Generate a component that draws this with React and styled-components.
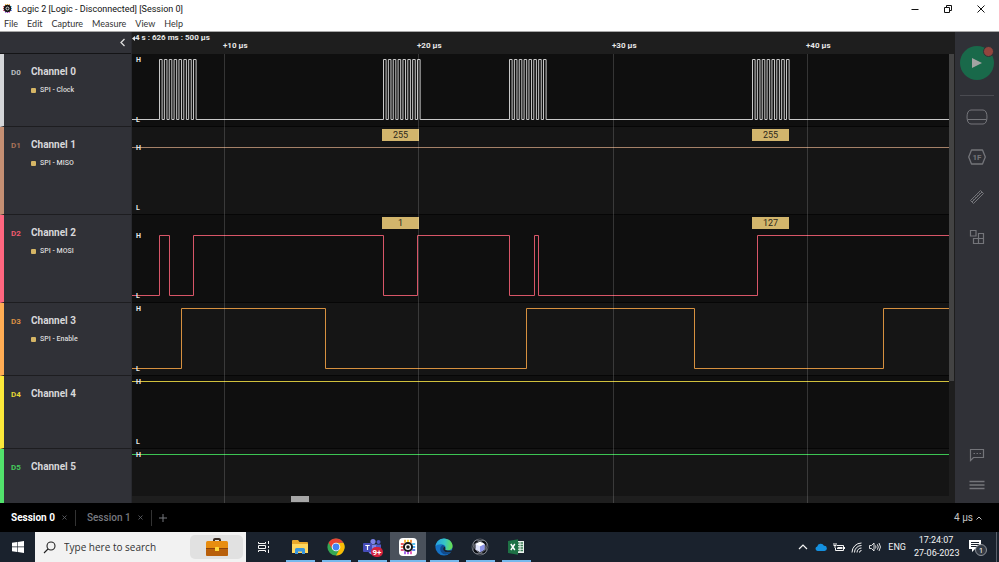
import React from "react";
import styled, { createGlobalStyle, css } from "styled-components";

const UI = `"Open Sans", "Noto Sans", sans-serif`;
const APP = `Roboto, "Liberation Sans", sans-serif`;

const SPAN = 817;
const pct = (x) => (x / SPAN) * 100;

const GlobalStyle = createGlobalStyle`
  * { box-sizing: border-box; }
  body { margin: 0; background: #000; }
  button, input { font: inherit; color: inherit; border: 0; padding: 0; margin: 0; background: none; }
  button { cursor: pointer; }
  svg { display: block; }
`;

const Page = styled.div`
  height: 100vh;
  display: flex;
  flex-direction: column;
  overflow: hidden;
  font-family: ${APP};
`;

/* Window chrome */
const TitleBar = styled.header`
  display: flex;
  align-items: center;
  height: 17px;
  flex: none;
  padding: 0 2px;
  background: #fff;
  color: #111;
  font: 9px/16px ${APP};
`;
const Title = styled.h1`
  flex: 1;
  margin: 0 0 0 4px;
  font: inherit;
  white-space: nowrap;
`;
const WindowButton = styled.button`
  width: 33px;
  height: 16px;
  display: grid;
  place-items: center;
`;
const MenuBar = styled.nav`
  display: flex;
  gap: 9px;
  height: 15px;
  flex: none;
  padding-left: 4px;
  background: #fff;
  border-bottom: 1px solid #a8a8a8;
  color: #333;
  font: 9px/14px Lato, ${UI};
`;
const MenuItem = styled.button`
  height: 14px;
  line-height: 14px;
`;

/* Workspace */
const Workspace = styled.main`
  flex: 1;
  min-height: 0;
  display: grid;
  grid-template-columns: 132px minmax(0, 1fr) 44px;
`;
const Sidebar = styled.section`
  display: flex;
  flex-direction: column;
  min-height: 0;
  overflow: hidden;
  background: #303137;
  border-right: 1px solid #28292e;
`;
const SidebarHead = styled.div`
  height: 22px;
  flex: none;
  display: flex;
  align-items: center;
  justify-content: flex-end;
  padding-right: 5px;
  border-bottom: 1px solid #141416;
  color: #ddd;
`;
const Channel = styled.article`
  flex: none;
  display: grid;
  grid-template-columns: 20px 1fr;
  align-content: start;
  height: ${(p) => p.$height}px;
  padding: 10px 0 0 7px;
  border-left: 4px solid ${(p) => p.$color};
  border-bottom: 1px solid #1d1d20;
`;
const ChannelTag = styled.span`
  font: 700 8px/18px ${APP};
  color: ${(p) => p.$color};
`;
const ChannelName = styled.h2`
  margin: 0;
  font: 700 10px/16px ${APP};
  color: #d8d8da;
`;
const Analyzer = styled.p`
  grid-column: 2;
  display: flex;
  align-items: center;
  gap: 4px;
  margin: 2px 0 0;
  font: 500 7px/12px ${APP};
  color: #dcdcdc;

  &::before {
    content: "";
    width: 5px;
    height: 5px;
    border-radius: 1px;
    background: #d5b565;
  }
`;

const Plot = styled.section`
  display: grid;
  grid-template: 22px minmax(0, 1fr) 7px / minmax(0, 1fr) 6px;
  min-height: 0;
  background: #1e1e1e;
`;
const Ruler = styled.div`
  grid-area: 1 / 1;
  position: relative;
  color: #e8e8e8;
  font: 700 8px/12px ${APP};
  white-space: nowrap;
`;
const RulerStart = styled.span`
  display: flex;
  align-items: center;
`;
const RulerTick = styled.span`
  position: absolute;
  top: 8px;
  left: ${(p) => pct(p.$at)}%;
  margin-left: -1px;
`;
const Traces = styled.div`
  grid-area: 2 / 1;
  min-height: 0;
  overflow: hidden;
`;
const Grid = styled.div`
  grid-area: 2 / 1 / 4 / 2;
  position: relative;
  pointer-events: none;
`;
const GridLine = styled.i`
  position: absolute;
  top: 0;
  bottom: 0;
  left: ${(p) => pct(p.$at)}%;
  width: 1px;
  background: rgba(255, 255, 255, 0.16);
`;
const Lane = styled.div`
  position: relative;
  height: ${(p) => p.$height}px;
  background: ${(p) => (p.$alt ? "#151515" : "#0f0f0f")};
  border-bottom: 1px solid #060606;

  svg { width: 100%; height: 100%; }
`;
const Level = styled.span`
  position: absolute;
  left: 4px;
  top: ${(p) => p.$top}px;
  font: 700 7px/8px ${APP};
  color: #e8e8e8;
`;
const Bubble = styled.span`
  position: absolute;
  top: 2px;
  left: ${(p) => pct(p.$at)}%;
  width: ${pct(37)}%;
  background: #d2b56c;
  color: #2b2719;
  font: 9px/12px ${APP};
  text-align: center;
`;
const VerticalThumb = styled.div`
  grid-area: 2 / 2;
  height: 327px;
  margin-right: 1px;
  background: #434343;
`;
const HorizontalTrack = styled.div`
  grid-area: 3 / 1;
  padding-left: 19%;
`;
const HorizontalThumb = styled.div`
  width: 18px;
  height: 6px;
  margin-left: 4px;
  background: #a6a6a6;
`;

const Rail = styled.aside`
  display: flex;
  flex-direction: column;
  align-items: center;
  padding: 14px 0 7px;
  background: #303137;
  color: #74757a;
`;
const PlayButton = styled.button`
  position: relative;
  width: 34px;
  height: 34px;
  border-radius: 50%;
  background: #19694a;
  display: grid;
  place-items: center;
`;
const RecordDot = styled.i`
  position: absolute;
  top: 0;
  right: 0;
  width: 11px;
  height: 11px;
  border-radius: 50%;
  background: #92453e;
  border: 1px solid #303137;
`;
const RailRule = styled.hr`
  width: 34px;
  margin: 15px 0 10px;
  border: 0;
  border-top: 1px solid #4a4b51;
`;
const RailTools = styled.div`
  display: flex;
  flex-direction: column;
  gap: 18px;
`;
const RailFoot = styled(RailTools)`
  margin-top: auto;
  gap: 8px;
`;
const RailButton = styled.button`
  width: 34px;
  height: 22px;
  display: grid;
  place-items: center;
`;

/* Session tabs */
const SessionBar = styled.footer`
  display: flex;
  align-items: center;
  flex: none;
  height: 29px;
  padding: 0 17px 0 7px;
  background: #000;
  color: #77797f;
  font: 500 10px/16px ${APP};
`;
const Session = styled.div`
  display: flex;
  align-items: center;
  gap: 7px;
  padding: 0 8px 0 4px;
  margin-right: 7px;
  border-right: 1px solid #333;
`;
const SessionName = styled.button`
  ${(p) => p.$active && css`color: #fff; font-weight: 700;`}
`;
const ScaleButton = styled.button`
  display: flex;
  align-items: center;
  gap: 3px;
  margin-left: auto;
  color: #c4c4c4;
  font-weight: 400;
`;

/* Desktop taskbar */
const Taskbar = styled.div`
  display: flex;
  flex: none;
  height: 30px;
  background: #1a222d;
  color: #f4f4f4;
  font-family: ${UI};
`;
const StartButton = styled.button`
  width: 35px;
  display: grid;
  place-items: center;
`;
const TaskButton = styled.button`
  width: 36px;
  display: grid;
  place-items: center;
  ${(p) => p.$active && css`background: #4a515b;`}
  ${(p) => p.$running && css`
    background-image: linear-gradient(#76b9ed, #76b9ed);
    background-repeat: no-repeat;
    background-position: center bottom;
    background-size: ${p.$active ? "100%" : "29px"} 2px;
  `}
`;
const Search = styled.label`
  display: flex;
  align-items: center;
  width: 211px;
  padding: 0 3px 0 8px;
  background: #f2f2f2;
  color: #222;
`;
const SearchInput = styled.input`
  flex: 1;
  min-width: 0;
  margin-left: 8px;
  font-size: 10px;
  outline: 0;
  &::placeholder { color: #333; opacity: 1; }
`;
const Highlight = styled.span`
  display: grid;
  place-items: center;
  width: 53px;
  height: 24px;
  border-radius: 5px;
  background: #e1e1e1;
`;
const Tray = styled.div`
  display: flex;
  align-items: center;
  gap: 5px;
  margin-left: auto;
  padding-right: 2px;
  font: 9px/13px ${APP};
`;
const TrayButton = styled.button`
  width: 13px;
  height: 28px;
  display: grid;
  place-items: center;
`;
const Language = styled.button`
  margin-left: 2px;
`;
const Clock = styled.time`
  margin-left: 3px;
  width: 44px;
  text-align: center;
  white-space: nowrap;
`;
const Notice = styled.button`
  width: 26px;
  margin-left: 2px;
  display: grid;
  place-items: center;
`;
const PeekEdge = styled.i`
  width: 1px;
  height: 30px;
  background: #59606a;
`;

const burst = (start) =>
  Array.from({ length: 8 }, (_, i) => [start + i * 4.86, start + i * 4.86 + 2.6]).flat();

/* Each trace lists the positions where the signal toggles. */
const CHANNELS = [
  { tag: "D0", name: "Channel 0", spi: "SPI - Clock", color: "#d4d6d9", text: "#b9bbbf", line: "#c9c9c9", height: 73,
    edges: [...burst(27.5), ...burst(251.5), ...burst(377.5), ...burst(620.5)] },
  { tag: "D1", name: "Channel 1", spi: "SPI - MISO", color: "#c58f73", text: "#a9735a", line: "#a58168", height: 88,
    high: true, edges: [], bubbles: [[250, "255"], [620, "255"]] },
  { tag: "D2", name: "Channel 2", spi: "SPI - MOSI", color: "#ff6680", text: "#ee5a6e", line: "#d85668", height: 88,
    edges: [27.5, 37.5, 61.5, 251.5, 285.5, 377.5, 402.5, 406.5, 625.5], bubbles: [[250, "1"], [620, "127"]] },
  { tag: "D3", name: "Channel 3", spi: "SPI - Enable", color: "#ffad54", text: "#d98f45", line: "#d6903f", height: 73,
    edges: [49.5, 193.5, 394.5, 562.5, 751.5] },
  { tag: "D4", name: "Channel 4", color: "#fbe93a", text: "#e3d535", line: "#d0c03c", height: 73, high: true, edges: [] },
  { tag: "D5", name: "Channel 5", color: "#52e26c", text: "#45c95c", line: "#3cc453", height: 73, high: true, partial: true, edges: [] },
];

const TICKS = [[92, "+10 µs"], [286, "+20 µs"], [481, "+30 µs"], [675, "+40 µs"]];

function Trace({ channel, index }) {
  const top = channel.bubbles ? 20 : 5;
  const hi = top + 0.5;
  const lo = top + 60.5;
  let level = channel.high ? hi : lo;
  let d = `M0 ${level}`;
  channel.edges.forEach((x) => {
    level = level === hi ? lo : hi;
    d += `H${x}V${level}`;
  });
  d += `H${SPAN}`;
  return (
    <Lane $height={channel.height} $alt={index % 2 === 1}>
      <svg viewBox={`0 0 ${SPAN} ${channel.height - 1}`} preserveAspectRatio="none" aria-hidden="true">
        <path d={d} fill="none" stroke={channel.line} vectorEffect="non-scaling-stroke" />
      </svg>
      <Level $top={top - 3}>H</Level>
      {!channel.partial && <Level $top={top + 57}>L</Level>}
      {channel.bubbles?.map(([at, value]) => <Bubble key={at} $at={at}>{value}</Bubble>)}
    </Lane>
  );
}

function LogicLogo({ size, light }) {
  const pin = (x, y, w, h, c) => <rect key={`${x}-${y}`} x={x} y={y} width={w} height={h} fill={c} />;
  return (
    <svg width={size} height={size} viewBox="0 0 18 18" aria-hidden="true">
      {light && <rect width="18" height="18" rx="4" fill="#fff" />}
      {[5.2, 8.2, 11.2].map((v, i) => [
        pin(v, 1.8, 1.6, 3, ["#f9a11b", "#fdd017", "#f47b20"][i]),
        pin(v, 13.2, 1.6, 3, ["#8f46e8", "#b03ee0", "#e83fa8"][i]),
        pin(1.8, v, 3, 1.6, ["#e8343f", "#f04e37", "#d6336c"][i]),
        pin(13.2, v, 3, 1.6, ["#35b2e8", "#2196f3", "#3c62e8"][i]),
      ])}
      <circle cx="9" cy="9" r={light ? 5 : 6} fill="#161616" />
      <circle cx="9" cy="9" r="2.4" fill="none" stroke="#fff" strokeWidth="1.3" />
    </svg>
  );
}

const Line = ({ w = 12, h = 12, sw = 1, children, ...rest }) => (
  <svg width={w} height={h} viewBox={`0 0 ${w} ${h}`} fill="none" stroke="currentColor" strokeWidth={sw} aria-hidden="true" {...rest}>
    {children}
  </svg>
);

function Briefcase() {
  return (
    <svg width="24" height="19" viewBox="0 0 24 19" aria-hidden="true">
      <path d="M9 4V2q0-1 1-1h4q1 0 1 1v2" fill="none" stroke="#3a2c22" strokeWidth="2" />
      <rect x="1" y="3" width="22" height="15" rx="1.5" fill="#e88d10" />
      <rect x="1" y="10" width="22" height="8" rx="1.5" fill="#b85f0b" />
      <path d="M1 10.5h22" stroke="#8b420a" />
      <rect x="10" y="9" width="4" height="4" rx=".5" fill="#ffd93b" />
    </svg>
  );
}
function Windows() {
  return (
    <svg width="12" height="12" viewBox="0 0 12 12" fill="#fff" aria-hidden="true">
      <path d="M0 1.7 5.2 1v4.6H0zM5.8.9 12 0v5.6H5.8zM0 6.3h5.2v4.6L0 10.3zM5.8 6.3H12V12l-6.2-.9z" />
    </svg>
  );
}
function Folder() {
  return (
    <svg width="18" height="16" viewBox="0 0 18 16" aria-hidden="true">
      <path d="M1 2q0-1 1-1h5l1.5 2H16q1 0 1 1v10H1z" fill="#e9a92c" />
      <path d="M1 5h16v9H1z" fill="#ffd75e" />
      <path d="M4 15v-4.5q0-1.5 1.5-1.5h7q1.5 0 1.5 1.5V15h-3v-2.5H7V15z" fill="#3a95dc" />
    </svg>
  );
}
function Chrome() {
  return (
    <svg width="18" height="18" viewBox="0 0 18 18" aria-hidden="true">
      <circle cx="9" cy="9" r="8.6" fill="#34a853" />
      <path d="M9 4.7h7.45A8.6 8.6 0 0 1 9 17.6l3.7-6.5z" fill="#fbbc05" />
      <path d="M1.55 4.7A8.6 8.6 0 0 1 16.45 4.7H9L5.3 11z" fill="#ea4335" />
      <circle cx="9" cy="9" r="4.3" fill="#fff" />
      <circle cx="9" cy="9" r="3.4" fill="#4285f4" />
    </svg>
  );
}
function Teams() {
  return (
    <svg width="22" height="20" viewBox="0 0 22 20" aria-hidden="true">
      <circle cx="12" cy="4.5" r="2.6" fill="#7b83eb" />
      <circle cx="17.5" cy="5" r="2" fill="#5059c9" />
      <path d="M7 7.5h9v6q-1 4-4.5 4T7 13.5z" fill="#7b83eb" />
      <path d="M15 7.5h5V13h-5z" fill="#5059c9" />
      <rect x="2" y="6" width="9" height="9" rx="1" fill="#454cb9" />
      <path d="M4.3 8.5h4.4M6.5 8.5V13" stroke="#fff" strokeWidth="1.2" />
      <rect x="10" y="10" width="12" height="10" rx="5" fill="#d4213d" />
      <text x="16" y="17.7" fill="#fff" fontFamily="Roboto, sans-serif" fontSize="8" fontWeight="700" textAnchor="middle">9+</text>
    </svg>
  );
}
function Edge() {
  return (
    <svg width="18" height="18" viewBox="0 0 18 18" aria-hidden="true">
      <defs>
        <linearGradient id="edgeTop" x1="0" x2="1" y1=".3" y2=".4">
          <stop stopColor="#269fe0" /><stop offset=".55" stopColor="#37c6c4" /><stop offset="1" stopColor="#6adf4c" />
        </linearGradient>
      </defs>
      <circle cx="9" cy="9" r="8.6" fill="#1571c4" />
      <path d="M.5 8.5C1 3.500 4.5.4 9 .4c5 0 8.600 3.600 8.600 7.600 0 2.700-2 4.400-4.700 4.400-2 0-3.200-.8-2.700-1.600.8-1.300.5-3.800-2.700-4.300C4.200 6 1.300 7 .5 8.500z" fill="url(#edgeTop)" />
      <path d="M7.500 7C5 8.500 4.500 12 6.500 14.500s6 3 9.500-.5c-3 1.200-6.500.4-7.600-1.800C7.500 10.500 8 9 9.400 8.300 9 7.600 8.300 7.200 7.500 7z" fill="#114a8c" />
      <path d="M9.200 8.500c-1.200 1-1.500 3-.3 4.400 1.500 1.600 4.600 2 7.800.6l.3-1.300c-1.500.5-5.800.8-6.900-.7.700-1 .3-2.300-.9-3z" fill="#1a222d" />
    </svg>
  );
}
function Cube() {
  return (
    <svg width="18" height="18" viewBox="0 0 18 18" fill="none" aria-hidden="true">
      <circle cx="9" cy="9" r="8" fill="#0b0d12" stroke="#777d88" strokeWidth=".7" />
      <ellipse cx="9" cy="9" rx="8" ry="5" transform="rotate(50 9 9)" stroke="#8c919b" strokeWidth=".7" />
      <ellipse cx="9" cy="9" rx="8" ry="5.5" transform="rotate(-40 9 9)" stroke="#8c919b" strokeWidth=".7" />
      <path d="m9 3.800 4.500 2.300v5.500L9 14.200l-4.500-2.600V6.100z" fill="#dfe2fb" />
      <path d="m9 8.300 4.500-2.200v5.500L9 14.200z" fill="#8d95e8" />
      <path d="m9 3.800 4.500 2.300L9 8.300 4.500 6.100z" fill="#fff" />
    </svg>
  );
}
function Excel() {
  return (
    <svg width="18" height="16" viewBox="0 0 18 16" aria-hidden="true">
      <rect x="8" y="2" width="9" height="12" fill="#e9f3ec" />
      <path d="M10 4h2.500M13.500 4H16M10 6.500h2.500M13.500 6.500H16M10 9h2.500M13.500 9H16M10 11.500h2.500M13.500 11.500H16" stroke="#3c7d56" strokeWidth="1.3" />
      <path d="M1 2 11 .3v15.400L1 14z" fill="#1e7145" />
      <path d="m3.800 5 4 6M7.800 5l-4 6" stroke="#fff" strokeWidth="1.4" />
    </svg>
  );
}

const APPS = [
  ["File Explorer", <Folder />],
  ["Chrome", <Chrome />],
  ["Teams", <Teams />],
  ["Logic 2", <LogicLogo size={18} light />, true],
  ["Edge", <Edge />],
  ["Eclipse", <Cube />],
  ["Excel", <Excel />],
];

const SmallClose = () => <Line w={5} h={5} sw={0.8} color="#66686d"><path d="m.5.5 4 4m0-4-4 4" /></Line>;

export default function App() {
  return (
    <Page>
      <GlobalStyle />
      <TitleBar>
        <LogicLogo size={11} />
        <Title>Logic 2 [Logic - Disconnected] [Session 0]</Title>
        <WindowButton aria-label="Minimize"><Line w={8} h={8}><path d="M.5 4.500h7" /></Line></WindowButton>
        <WindowButton aria-label="Restore">
          <Line w={8} h={8}><path d="M.5 2.500h5v5h-5zM2.500 2.500v-2h5v5h-2" /></Line>
        </WindowButton>
        <WindowButton aria-label="Close"><Line w={8} h={8}><path d="m.5.5 7 7m0-7-7 7" /></Line></WindowButton>
      </TitleBar>
      <MenuBar>
        {["File", "Edit", "Capture", "Measure", "View", "Help"].map((m) => <MenuItem key={m}>{m}</MenuItem>)}
      </MenuBar>

      <Workspace>
        <Sidebar>
          <SidebarHead>
            <button aria-label="Collapse channels"><Line w={7} h={9} sw={1.3}><path d="M5.500 1 2 4.500 5.500 8" /></Line></button>
          </SidebarHead>
          {CHANNELS.map((c) => (
            <Channel key={c.tag} $height={c.height} $color={c.color}>
              <ChannelTag $color={c.text}>{c.tag}</ChannelTag>
              <ChannelName>{c.name}</ChannelName>
              {c.spi && <Analyzer>{c.spi}</Analyzer>}
            </Channel>
          ))}
        </Sidebar>

        <Plot>
          <Ruler>
            <RulerStart>
              <svg width="3" height="5" viewBox="0 0 3 5" fill="#e8e8e8" aria-hidden="true"><path d="M3 0v5L0 2.500z" /></svg>
              4 s : 626 ms : 500 µs
            </RulerStart>
            {TICKS.map(([at, label]) => <RulerTick key={at} $at={at}>{label}</RulerTick>)}
          </Ruler>
          <Traces>
            {CHANNELS.map((c, i) => <Trace key={c.tag} channel={c} index={i} />)}
          </Traces>
          <VerticalThumb />
          <HorizontalTrack><HorizontalThumb /></HorizontalTrack>
          <Grid>
            {TICKS.map(([at]) => <GridLine key={at} $at={at} />)}
          </Grid>
        </Plot>

        <Rail>
          <PlayButton aria-label="Start capture">
            <svg width="10" height="12" viewBox="0 0 10 12" fill="#a3a3a3" aria-hidden="true"><path d="m0 1 10 5-10 5z" /></svg>
            <RecordDot />
          </PlayButton>
          <RailRule />
          <RailTools>
            <RailButton aria-label="Device">
              <Line w={22} h={16}><path d="M5 1h12q2 0 3 2t1 5q0 3-1 5t-3 2H5q-2 0-3-2T1 8q0-3 1-5t3-2zM1.500 10.500h19" /></Line>
            </RailButton>
            <RailButton aria-label="Analyzers">
              <Line w={18} h={16}>
                <path d="M3.500 1h11l2.800 7-2.800 7h-11L.7 8z" strokeLinejoin="round" strokeWidth="1.3" />
                <text x="9" y="11" fill="currentColor" stroke="none" textAnchor="middle" fontFamily="Roboto, sans-serif" fontSize="8" fontWeight="700">1F</text>
              </Line>
            </RailButton>
            <RailButton aria-label="Measurements">
              <Line w={16} h={16}><path d="m1.500 11.500 10-10 3 3-10 10zM3 13 13 3M3.500 9.500l1 1M5.500 7.500l1 1M7.500 5.500l1 1M9.500 3.500l1 1" /></Line>
            </RailButton>
            <RailButton aria-label="Extensions">
              <Line w={16} h={16} sw={1.2}><path d="M1.500 1.500H7V7H1.500zM9.500 4.500h5v5h-5zM4.500 9.500h5v5h-5zM9.500 9.500h5v5h-5z" /></Line>
            </RailButton>
          </RailTools>
          <RailFoot>
            <RailButton aria-label="Feedback">
              <Line w={16} h={14} sw={1.2}><path d="M1.500 12.500v-11h13v8h-10zM4.500 5.500H6M7.500 5.500H9M10.500 5.500H12" /></Line>
            </RailButton>
            <RailButton aria-label="Menu">
              <Line w={16} h={10} sw={1.5}><path d="M.5 1.500h15M.5 5h15M.5 8.500h15" /></Line>
            </RailButton>
          </RailFoot>
        </Rail>
      </Workspace>

      <SessionBar>
        <Session>
          <SessionName $active>Session 0</SessionName>
          <button aria-label="Close Session 0"><SmallClose /></button>
        </Session>
        <Session>
          <SessionName>Session 1</SessionName>
          <button aria-label="Close Session 1"><SmallClose /></button>
        </Session>
        <button aria-label="New session"><Line w={8} h={8}><path d="M4 0v8M0 4h8" /></Line></button>
        <ScaleButton>4 µs<Line w={6} h={4}><path d="M.5 3.500 3 1l2.500 2.500" /></Line></ScaleButton>
      </SessionBar>

      <Taskbar>
        <StartButton aria-label="Start"><Windows /></StartButton>
        <Search>
          <Line w={13} h={13} sw={1.1}><path d="M8 1a4 4 0 1 1 0 8 4 4 0 0 1 0-8zM5 8l-4 4" /></Line>
          <SearchInput type="text" placeholder="Type here to search" aria-label="Type here to search" />
          <Highlight><Briefcase /></Highlight>
        </Search>
        <TaskButton aria-label="Task view">
          <Line w={12} h={12}><path d="M.5 1v1.500h7V1M.5 11V9.500h7V11M.5 4.500h7v3h-7zM10.500 0v3M10.500 5v2M10.500 8.500V12" /></Line>
        </TaskButton>
        {APPS.map(([name, icon, active]) => (
          <TaskButton key={name} aria-label={name} $running $active={active}>{icon}</TaskButton>
        ))}
        <Tray>
          <TrayButton aria-label="Show hidden icons"><Line w={10} h={6} sw={1.2}><path d="m1 5 4-4 4 4" /></Line></TrayButton>
          <TrayButton aria-label="OneDrive">
            <svg width="12" height="8" viewBox="0 0 12 8" aria-hidden="true">
              <path d="M2.500 8a2.300 2.300 0 0 1-.3-4.500A3.600 3.600 0 0 1 9 2.800 2.600 2.600 0 0 1 9.500 8z" fill="#1490df" />
            </svg>
          </TrayButton>
          <TrayButton aria-label="Battery">
            <Line w={12} h={9}><path d="M4 2.500h6.500v5h-8V5M11.500 4v2M1 0v2M3 0v2M.5 2.500h3M2 3v2" /><path d="M5 4h4.500v2H4V5z" fill="currentColor" stroke="none" /></Line>
          </TrayButton>
          <TrayButton aria-label="Network">
            <Line w={11} h={11}><path d="M1 10.500A9.500 9.500 0 0 1 10.500 1M3.500 10.500a7 7 0 0 1 7-7M6 10.500A4.500 4.500 0 0 1 10.500 6M8.500 10.500a2 2 0 0 1 2-2" /></Line>
          </TrayButton>
          <TrayButton aria-label="Volume">
            <Line w={12} h={10} sw={0.9}><path d="M.5 3.500h2L5 1v8L2.500 6.500h-2zM6.500 3.500q1 1.500 0 3M8.300 2.300q2 2.700 0 5.400M10 1q3 4 0 8" /></Line>
          </TrayButton>
          <Language>ENG</Language>
          <Clock>17:24:07<br />27-06-2023</Clock>
          <Notice aria-label="1 new notification">
            <svg width="20" height="19" viewBox="0 0 20 19" aria-hidden="true">
              <path d="M1 2h12v9H7l-3 3v-3H1z" fill="#fff" />
              <path d="M3 4.500h8M3 6.500h8M3 8.500h6" stroke="#1a222d" />
              <circle cx="13" cy="12" r="5.5" fill="#333a44" stroke="#a8acb2" strokeWidth=".8" />
              <text x="13" y="15" fill="#fff" textAnchor="middle" fontFamily="Open Sans, sans-serif" fontSize="8">1</text>
            </svg>
          </Notice>
          <PeekEdge />
        </Tray>
      </Taskbar>
    </Page>
  );
}
